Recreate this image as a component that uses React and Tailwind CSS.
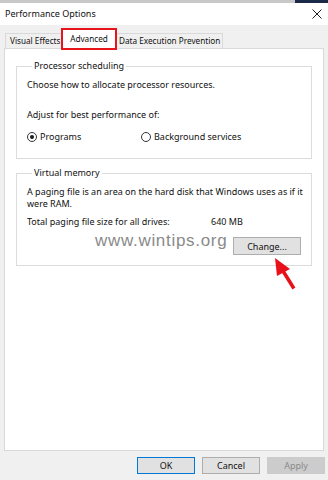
const font = { fontFamily: '"Noto Sans", "Open Sans", sans-serif' }

const Radio = ({ checked, label }) => (
    <label className="flex items-center gap-[3px]">
        <span className="w-[10px] h-[10px] rounded-full border border-[#333] bg-white flex items-center justify-center">
            {checked && <span className="w-[4px] h-[4px] rounded-full bg-[#1a1a1a]" />}
        </span>
        <span>{label}</span>
    </label>
)

const Group = ({ title, children, className = '' }) => (
    <fieldset className={`border border-[#dcdcdc] mx-[11px] pl-[10px] pr-[3px] ${className}`}>
        <legend className="ml-[5px] px-[2px] leading-[16px]">{title}</legend>
        {children}
    </fieldset>
)

const Button = ({ children, primary, disabled, className = '' }) => (
    <button
        className={`h-[17px] w-[58px] border text-[9px] leading-none ${
            primary ? 'border-[#0078d7] bg-[#e1e1e1]' : disabled ? 'border-[#cccccc] bg-[#cccccc] text-[#8a8a8a]' : 'border-[#adadad] bg-[#e1e1e1]'
        } ${className}`}
    >
        {children}
    </button>
)

export default function App() {
    return (
        <div className="relative w-[328px] h-[480px] overflow-hidden bg-[#f0f0f0] text-[9px] text-[#111] flex flex-col" style={font}>
            <div className="h-[3px] flex">
                <div className="flex-1 bg-[#c8c8c8]" />
                <div className="w-[33px] bg-[#1c2a4a]" />
            </div>

            <div className="h-[22px] bg-white flex items-center justify-between pl-[5px] pr-[5px]">
                <span className="text-[9px]">Performance Options</span>
                <svg width="10" height="10" viewBox="0 0 10 10" className="mr-[1px]">
                    <path d="M0.5 0.5 L9.5 9.5 M9.5 0.5 L0.5 9.5" stroke="#222" strokeWidth="1" />
                </svg>
            </div>

            <div className="flex items-end h-[23px] pl-[5px] whitespace-nowrap text-[8.2px]">
                <div className="shrink-0 h-[15px] w-[57px] pl-[4px] border border-b-0 border-[#d9d9d9] bg-[#f0f0f0] flex items-center">Visual Effects</div>
                <div className="shrink-0 relative h-[19px] w-[54px] justify-center bg-white flex items-center -mb-[1px] z-10">
                    Advanced
                    <span className="absolute -left-[1px] -right-[1px] -top-[2px] -bottom-[1px] border-2 border-[#e8141c]" />
                </div>
                <div className="shrink-0 h-[15px] w-[107px] pl-[2px] border border-b-0 border-[#d9d9d9] bg-[#f0f0f0] flex items-center">Data Execution Prevention</div>
            </div>

            <div className="mx-[4px] h-[403px] bg-white border border-[#d9d9d9] pt-[9px] leading-[12px]">
                <Group title="Processor scheduling" className="pb-[15px]">
                    <p className="mt-[5px]">Choose how to allocate processor resources.</p>
                    <p className="mt-[18px]">Adjust for best performance of:</p>
                    <div className="flex mt-[10px]">
                        <div className="w-[114px]">
                            <Radio checked label="Programs" />
                        </div>
                        <Radio label="Background services" />
                    </div>
                </Group>

                <Group title="Virtual memory" className="mt-[6px] pb-[10px]">
                    <p className="mt-[5px]">A paging file is an area on the hard disk that Windows uses as if it were RAM.</p>
                    <div className="flex mt-[6px]">
                        <span className="w-[184px]">Total paging file size for all drives:</span>
                        <span>640 MB</span>
                    </div>
                    <div className="flex justify-end mt-[9px] mr-[7px]">
                        <Button className="w-[68px] h-[18px]">Change...</Button>
                    </div>
                </Group>
            </div>

            <div className="flex justify-end gap-[7px] pr-[3px] mt-[6px]">
                <Button primary>OK</Button>
                <Button>Cancel</Button>
                <Button disabled>Apply</Button>
            </div>

            <span
                className="absolute left-[95px] top-[228px] text-[17px] tracking-[0.7px] text-[#8a8a8a]"
                style={{ fontFamily: '"Liberation Sans", Arial, sans-serif' }}
            >
                www.wintips.org
            </span>

            <svg className="absolute left-[268px] top-[254px]" width="32" height="38" viewBox="0 0 32 38">
                <path d="M7 4 L9 22 L22 15 Z" fill="#e8101a" />
                <path d="M15 17 L25 33" stroke="#e8101a" strokeWidth="3.5" strokeLinecap="square" />
            </svg>
        </div>
    )
}
